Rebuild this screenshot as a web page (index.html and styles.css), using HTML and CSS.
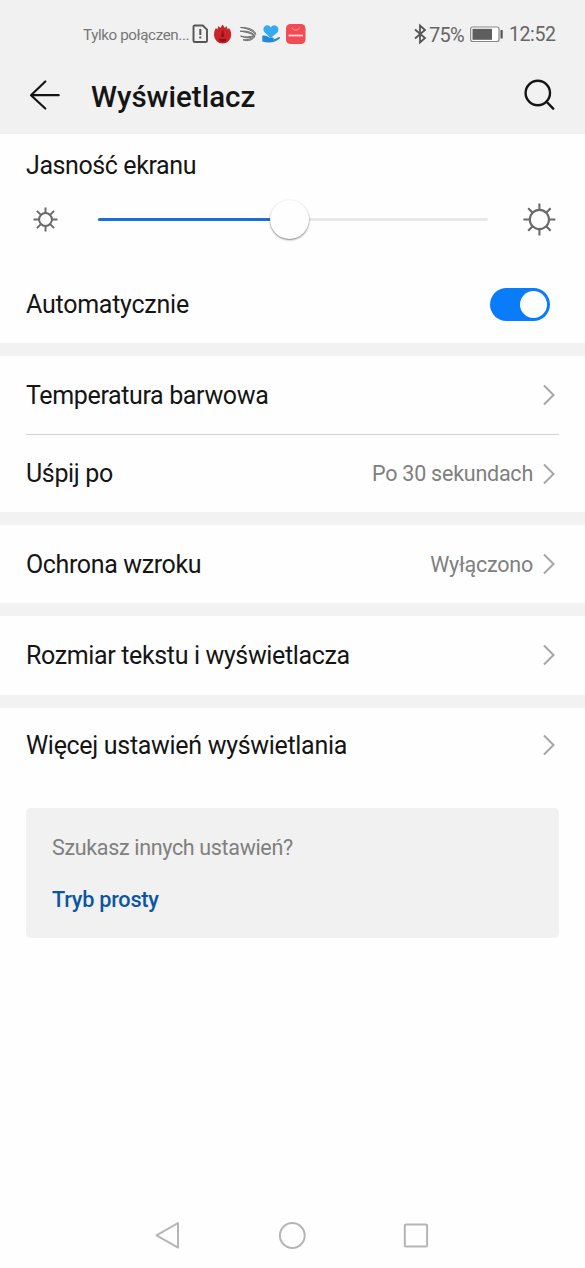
FILE: index.html
```html
<!DOCTYPE html>
<html lang="pl">
<head>
<meta charset="utf-8">
<title>Wyświetlacz</title>
<link rel="stylesheet" href="styles.css">
</head>
<body>
<header class="top">
  <div class="status">
    <span class="carrier">Tylko połączen...</span>
    <svg class="notifications" width="116" height="24" viewBox="190 22 116 24">
      <path d="M194.8 25.500h8l4.200 4.200v11a1.300 1.300 0 0 1-1.300 1.300h-10.900a1.300 1.300 0 0 1-1.300-1.300v-13.900a1.300 1.300 0 0 1 1.300-1.300z" fill="none" stroke="#555" stroke-width="1.900"/>
      <path d="M200.300 29v6M200.300 36.500v2" stroke="#555" stroke-width="2"/>
      <path d="M214 35c0-3 .8-5.500 2-7l1.300 1.500 1.200-3.500 1.800 2 2.300-3.500 2.300 3.500 1.500-2 1.300 3.500 1.100-1.500c1.800 2 2.400 4.500 2.400 7a8.600 8.600 0 0 1-17.200 0z" fill="#c9242a"/>
      <path d="M221 37l1-6.500h1.200l1 6.500zM218.500 38.800h8.200l-1.400 3.200h-5.400z" fill="#981118"/>
      <path d="M240.500 27.500c8-.5 15 2.500 15.200 7-3-3.500-8-6-15.200-7zM240 31.200c7-.5 12 1 14.500 4-4.500-2-8.500-3.200-14.500-4zM240.500 36c5 1.500 10 1 14-.8-3 3-9 3.500-14 .8zM243 39.800c4 .3 9-1 12-4-1.500 4.200-7 6-12 4z" fill="#aaa" stroke="#666" stroke-width=".9"/>
      <path d="M270.500 38l-5.800-5.500c-2.500-2.800-1-6.800 2.200-7.200 1.700-.1 3 .7 3.900 2.100 1-1.400 2.400-2.200 4.200-2 3.400.5 4.500 4.600 2.200 7.300z" fill="#35a9f2"/>
      <path d="M262.300 35.800c2.500-.8 4.800.1 7 1.800h3.500c1.200 0 1.200 1.200.2 1.700 2.500-.3 4.500-1.800 6.500-2.300 1 0 .8 1-.1 1.700-4 3.500-9.500 4.800-17.100 2.800z" fill="#2288d8"/>
      <rect x="286" y="24" width="19.500" height="20" rx="4.500" fill="#ef4c55"/>
      <path d="M288.500 35.500h14.500" stroke="#ffd5d7" stroke-width="1.800"/>
      <path d="M292 27.500c1 3.600 6.500 3.600 7.500 0" fill="none" stroke="#f99" stroke-width="1"/>
    </svg>
    <svg class="indicators" width="92" height="24" viewBox="412 22 92 24">
      <path d="M415 29.500l10 8.500-5 4.500v-17l5 4.500-10 8.500" fill="none" stroke="#555" stroke-width="1.800"/>
      <text x="429" y="41.500" class="percent">75%</text>
      <rect x="470.700" y="27" width="28.300" height="14.500" rx="2" fill="#fff" stroke="#888" stroke-width="1.200"/>
      <rect x="472.500" y="28.800" width="19.500" height="11" fill="#5e5e5e"/>
      <rect x="500.500" y="30" width="2.200" height="8.500" fill="#555"/>
    </svg>
    <span class="clock">12:52</span>
  </div>
  <div class="appbar">
    <svg class="back" width="32" height="32" viewBox="29 79 32 32"><path d="M58.700 95.200H31.500M45.300 81.500L31 95.200l14.300 13.300" fill="none" stroke="#151515" stroke-width="2.200" stroke-linecap="round" stroke-linejoin="round"/></svg>
    <h1 class="title">Wyświetlacz</h1>
    <svg class="search" width="34" height="34" viewBox="522 78 34 34"><circle cx="537.800" cy="93" r="12.200" fill="none" stroke="#151515" stroke-width="2.400"/><path d="M546.800 102l6.400 6.700" stroke="#151515" stroke-width="2.500" stroke-linecap="round"/></svg>
  </div>
</header>
<main class="settings">
  <section class="group">
    <div class="label brightness-label">Jasność ekranu</div>
    <div class="brightness">
      <svg class="sun-small" width="26" height="26" viewBox="-13.500 -12.500 26 26" fill="none" stroke="#6a6a6a" stroke-width="2"><circle r="6.400"/><path d="M0-6.500V-12M0 6.500V12M-6.500 0H-12M6.500 0H12M-4.600-4.600l-4-4M4.600-4.600l4-4M-4.600 4.600l-4 4M4.600 4.600l4 4"/></svg>
      <div class="slider"><div class="filled"></div><div class="knob"></div></div>
      <svg class="sun-large" width="34" height="34" viewBox="-16.400 -16.500 34 34" fill="none" stroke="#6a6a6a" stroke-width="2.100"><circle r="9.600"/><path d="M0-9.500V-16M0 9.500V16M-9.500 0H-16M9.500 0H16M-6.800-6.800l-4.400-4.400M6.800-6.800l4.400-4.400M-6.800 6.800l-4.400 4.400M6.800 6.800l4.400 4.400"/></svg>
    </div>
    <div class="row auto"><span class="label">Automatycznie</span><div class="switch"><div class="thumb"></div></div></div>
  </section>
  <section class="group">
    <div class="row"><span class="label">Temperatura barwowa</span><svg class="chevron" width="14" height="24" viewBox="0 0 14 24"><path d="M2 2.500l9.500 9.500L2 21.500"/></svg></div>
    <div class="row divided"><span class="label">Uśpij po</span><span class="value">Po 30 sekundach</span><svg class="chevron" width="14" height="24" viewBox="0 0 14 24"><path d="M2 2.500l9.500 9.500L2 21.500"/></svg></div>
  </section>
  <section class="group">
    <div class="row"><span class="label">Ochrona wzroku</span><span class="value">Wyłączono</span><svg class="chevron" width="14" height="24" viewBox="0 0 14 24"><path d="M2 2.500l9.500 9.500L2 21.500"/></svg></div>
  </section>
  <section class="group">
    <div class="row tall"><span class="label">Rozmiar tekstu i wyświetlacza</span><svg class="chevron" width="14" height="24" viewBox="0 0 14 24"><path d="M2 2.500l9.500 9.500L2 21.500"/></svg></div>
  </section>
  <section class="group last">
    <div class="row more"><span class="label">Więcej ustawień wyświetlania</span><svg class="chevron" width="14" height="24" viewBox="0 0 14 24"><path d="M2 2.500l9.500 9.500L2 21.500"/></svg></div>
    <div class="card">
      <p class="question">Szukasz innych ustawień?</p>
      <a class="link">Tryb prosty</a>
    </div>
  </section>
</main>
<nav class="navbar">
  <svg width="28" height="30" viewBox="154 1220 28 30"><path d="M156.500 1235.300L178 1223v24.600z"/></svg>
  <svg width="28" height="30" viewBox="278 1220 28 30"><circle cx="292.300" cy="1235.500" r="12.400"/></svg>
  <svg width="28" height="30" viewBox="402 1220 28 30"><rect x="404.800" y="1224.500" width="22.300" height="22" rx="1"/></svg>
</nav>
</body>
</html>
```
FILE: styles.css
```css
* { box-sizing: border-box; }
body {
  margin: 0;
  width: 585px;
  height: 1268px;
  display: flex;
  flex-direction: column;
  overflow: hidden;
  background: #fefefe;
  color: #151515;
  font-family: Roboto, sans-serif;
}
svg { display: block; flex: none; }
.top { height: 134px; background: #f1f1f1; }
.status {
  height: 58px;
  padding: 12px 0 0 83px;
  display: flex;
  align-items: flex-start;
  color: #666;
}
.carrier { width: 107px; line-height: 46px; font-size: 15.200px; letter-spacing: -.4px; white-space: nowrap; color: #777; }
.notifications { margin-top: 10px; }
.indicators { margin: 10px 0 0 106px; }
.percent { font-size: 20px; letter-spacing: -.7px; fill: #666; }
.clock { margin-left: 5px; line-height: 46px; font-size: 19.500px; letter-spacing: -.4px; }
.appbar { height: 76px; padding-left: 29px; display: flex; align-items: flex-start; }
.back { margin-top: 21px; }
.title { margin: 0 0 0 30px; width: 431px; line-height: 78px; font-size: 29.500px; font-weight: 500; }
.search { margin-top: 20px; }
.settings { flex: 1; display: flex; flex-direction: column; gap: 13px; background: #f2f2f2; }
.group { background: #fefefe; }
.label { font-size: 25px; letter-spacing: -.36px; white-space: nowrap; }
.brightness-label { height: 56px; padding-left: 26px; line-height: 63px; letter-spacing: -.4px; }
.brightness { height: 59px; padding-left: 32px; display: flex; align-items: center; }
.slider { position: relative; width: 390px; height: 3px; margin: 0 35px 0 40px; border-radius: 2px; background: #e8e8e8; }
.filled { width: 192px; height: 3px; border-radius: 2px; background: #1970ce; }
.knob {
  position: absolute;
  left: 172px;
  top: -18px;
  width: 39px;
  height: 39px;
  border-radius: 50%;
  background: #fefefe;
  box-shadow: 0 1px 2px rgba(0, 0, 0, .5);
}
.row { height: 78px; margin-left: 26px; margin-right: 26px; padding-right: 3px; display: flex; align-items: center; }
.row .label { flex: 1; }
.auto { height: 94px; padding: 16px 9px 0 0; }
.auto .label { letter-spacing: -.25px; }
.tall { height: 79px; padding-bottom: 1px; }
.more { padding-bottom: 4px; }
.more .label { letter-spacing: -.31px; }
.switch { width: 60px; height: 33px; padding: 3px; border-radius: 17px; background: #087cfa; display: flex; justify-content: flex-end; }
.thumb { width: 27px; height: 27px; border-radius: 50%; background: #fefefe; }
.divided { border-top: 1px solid #d2d2d2; }
.value { margin-right: 9px; font-size: 21.500px; letter-spacing: -.24px; color: #808080; }
.chevron { fill: none; stroke: #a6a6a6; stroke-width: 2; }
.last { flex: 1; }
.card { height: 130px; margin: 22px 26px 0; padding: 25px 26px; border-radius: 5px; background: #f1f1f1; }
.question { margin: 0; line-height: 30px; font-size: 21.500px; letter-spacing: -.34px; color: #808080; }
.link { display: block; margin-top: 22px; line-height: 30px; font-size: 21.700px; letter-spacing: -.25px; font-weight: 500; color: #0b56a4; }
.navbar { height: 64px; padding: 16px 0 0 154px; display: flex; gap: 96px; background: #fefefe; }
.navbar svg { fill: none; stroke: #b5b5b5; stroke-width: 2; stroke-linejoin: round; }
```
